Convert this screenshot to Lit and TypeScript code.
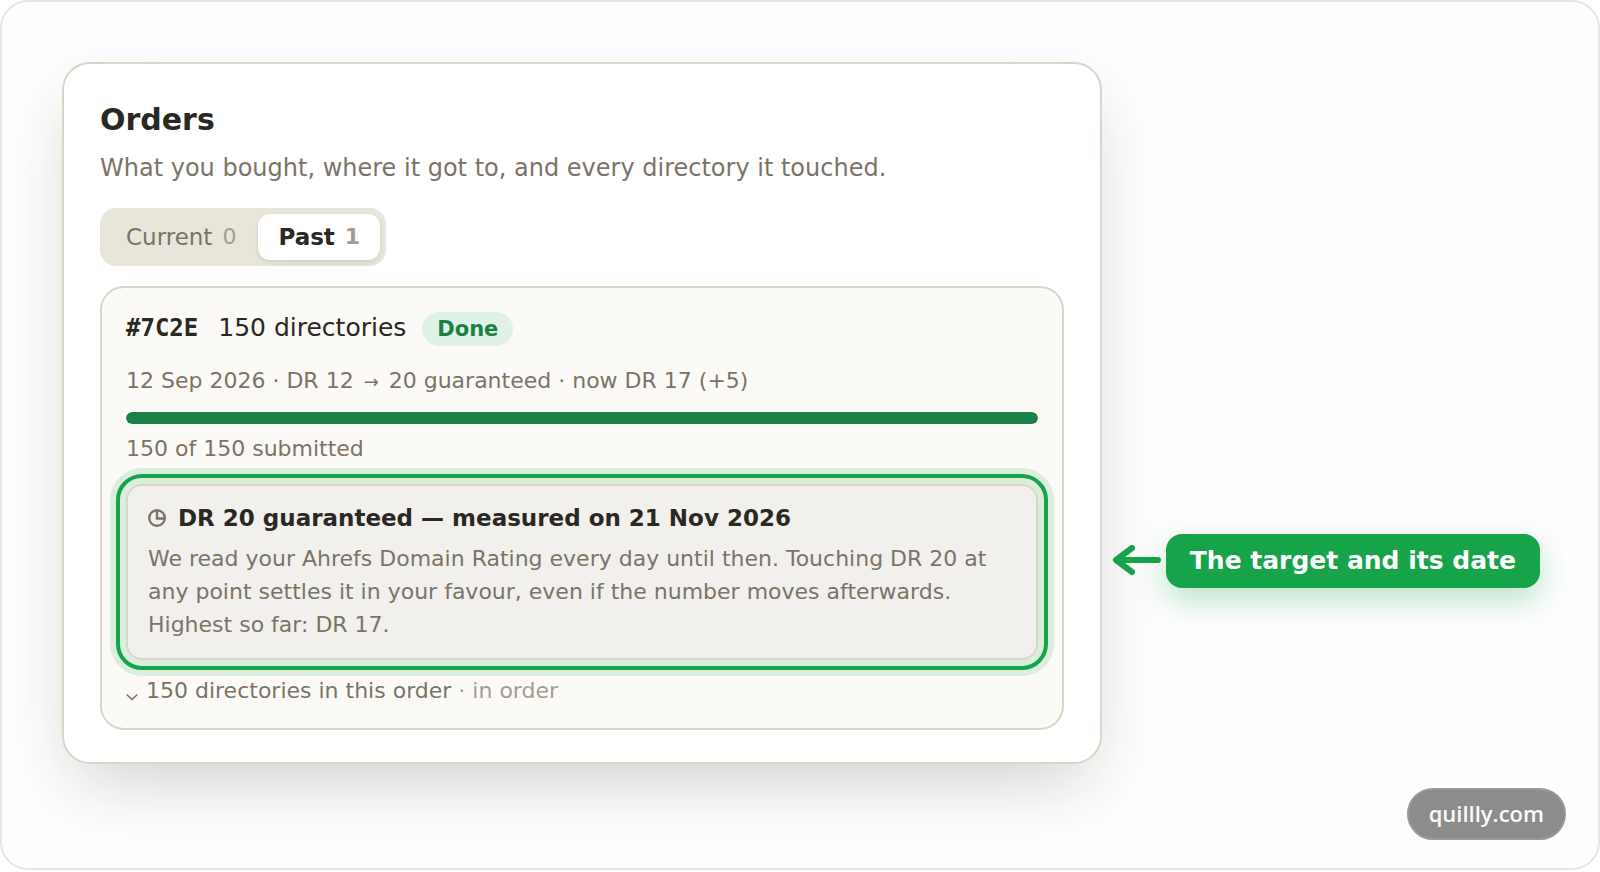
import { LitElement, html, css } from "lit";
import { customElement, state } from "lit/decorators.js";

@customElement("order-target")
class OrderTarget extends LitElement {
  static styles = css`
    :host {
      display: block;
      position: relative;
      padding: 15px 20px 17px;
      border: 2px solid #d9d6c9;
      border-radius: 16px;
      background: #f2f0ec;
    }
    :host::after {
      content: "";
      position: absolute;
      inset: -12px;
      border: 4px solid #16a34a;
      border-radius: 26px;
      box-shadow:
        0 0 0 6px rgba(22, 163, 74, 0.14),
        inset 0 0 0 6px rgba(22, 163, 74, 0.14);
      pointer-events: none;
    }
    .heading {
      display: flex;
      align-items: center;
      gap: 12px;
      margin: 0 0 7px;
      font-size: 23px;
      line-height: 34px;
      font-weight: 700;
      color: #2a2822;
    }
    .clock {
      flex: none;
      width: 18px;
      height: 18px;
      color: #7a7468;
    }
    .text {
      margin: 0;
      font-size: 22px;
      line-height: 33px;
      color: #7a7468;
    }
  `;

  render() {
    return html`
      <h3 class="heading">
        <svg class="clock" viewBox="0 0 18 18" fill="none" stroke="currentColor" stroke-width="2.4" aria-hidden="true">
          <circle cx="9" cy="9" r="7.8" />
          <path d="M9 1.5V9.5H16.5" />
        </svg>
        <span>DR 20 guaranteed — measured on 21 Nov 2026</span>
      </h3>
      <p class="text">
        We read your Ahrefs Domain Rating every day until then. Touching DR 20 at any point settles it in your favour,
        even if the number moves afterwards. Highest so far: DR 17.
      </p>
    `;
  }
}

@customElement("app-root")
class AppRoot extends LitElement {
  @state() private tab = "past";

  static styles = css`
    :host {
      display: block;
      font-family: Verdana, "DejaVu Sans", sans-serif;
      color: #2a2822;
    }
    * {
      box-sizing: border-box;
    }
    button {
      border: 0;
      background: none;
      font: inherit;
      color: inherit;
      cursor: pointer;
    }
    .frame {
      position: relative;
      display: flex;
      align-items: flex-start;
      gap: 10px;
      min-height: calc(100vh - 2px);
      padding: 60px 58px 60px 60px;
      border: 2px solid #e5e5e5;
      border-radius: 28px;
      background: #fefefe;
    }
    .card {
      flex: 1;
      min-width: 0;
      padding: 38px 36px 32px;
      border: 2px solid #d9d6c9;
      border-radius: 28px;
      background: #fff;
      box-shadow: 0 28px 70px -14px rgba(42, 36, 26, 0.22);
    }
    .title {
      margin: 0 0 12px;
      font-size: 30px;
      line-height: 36px;
      font-weight: 700;
    }
    .subtitle {
      margin: 0 0 22px;
      font-size: 24px;
      line-height: 36px;
      color: #7a7468;
    }
    .tabs {
      display: inline-flex;
      gap: 2px;
      padding: 6px;
      margin-bottom: 20px;
      border-radius: 16px;
      background: #e8e5da;
      vertical-align: top;
    }
    .tab {
      display: flex;
      gap: 10px;
      padding: 6px 20px;
      border-radius: 12px;
      font-size: 23px;
      line-height: 34px;
      color: #7a7468;
    }
    .tab.active {
      background: #fff;
      font-weight: 700;
      color: #2a2822;
      box-shadow: 0 2px 4px rgba(42, 40, 34, 0.12);
    }
    .count {
      font-size: 22px;
    }
    .faint {
      color: #a39d91;
    }
    .order {
      padding: 24px 24px 20px;
      border: 2px solid #d9d6c9;
      border-radius: 24px;
      background: #fcfaf6;
    }
    .row {
      display: flex;
      align-items: baseline;
      margin-bottom: 18px;
      font-size: 25px;
      line-height: 32px;
    }
    .code {
      margin-right: 20px;
      font-family: "DejaVu Sans Mono", monospace;
      font-size: 24px;
      font-weight: 700;
    }
    .badge {
      margin-left: 16px;
      padding: 0 15px;
      border-radius: 17px;
      background: #e0f1e6;
      color: #1b8047;
      font-size: 21px;
      line-height: 34px;
      font-weight: 700;
    }
    .meta {
      margin: 0;
      font-size: 22px;
      line-height: 34px;
      color: #7a7468;
    }
    .to {
      margin: 0 3px;
      font-size: 18px;
      line-height: 1;
    }
    .bar {
      height: 12px;
      margin: 14px 0 8px;
      border-radius: 6px;
      background: #e8e5da;
      overflow: hidden;
    }
    .fill {
      height: 100%;
      border-radius: 6px;
      background: #1b8047;
    }
    order-target {
      margin: 18px 0 14px;
    }
    .toggle {
      display: flex;
      align-items: center;
      gap: 8px;
      padding: 0;
      font-size: 22px;
      line-height: 34px;
      color: #7a7468;
    }
    .chevron {
      width: 12px;
      height: 20px;
    }
    .callout {
      display: flex;
      align-items: center;
      gap: 4px;
      margin-top: 472px;
    }
    .arrow {
      width: 50px;
      height: 32px;
    }
    .label {
      padding: 10px 24px;
      border-radius: 16px;
      background: #16a34a;
      color: #fff;
      font-size: 25px;
      line-height: 34px;
      font-weight: 700;
      white-space: nowrap;
      box-shadow: 0 12px 32px rgba(22, 163, 74, 0.3);
    }
    .site {
      position: absolute;
      right: 32px;
      bottom: 28px;
      padding: 8px 20px 10px;
      border: 2px solid #999;
      border-radius: 26px;
      background: #8c8c8c;
      color: #fafafa;
      font-family: "Open Sans", sans-serif;
      font-size: 22px;
      line-height: 30px;
      font-weight: 600;
      text-decoration: none;
    }
  `;

  private renderTab(id: string, name: string, count: number) {
    const active = this.tab === id;
    return html`
      <button
        class=${active ? "tab active" : "tab"}
        role="tab"
        aria-selected=${active ? "true" : "false"}
        @click=${() => (this.tab = id)}
      >
        <span>${name}</span><span class="faint count">${count}</span>
      </button>
    `;
  }

  render() {
    return html`
      <main class="frame">
        <section class="card">
          <h1 class="title">Orders</h1>
          <p class="subtitle">What you bought, where it got to, and every directory it touched.</p>
          <div class="tabs" role="tablist">
            ${this.renderTab("current", "Current", 0)}${this.renderTab("past", "Past", 1)}
          </div>
          <article class="order">
            <div class="row">
              <span class="code">#7C2E</span>
              <span>150 directories</span>
              <span class="badge">Done</span>
            </div>
            <p class="meta">12 Sep 2026 · DR 12 <span class="to">→</span> 20 guaranteed · now DR 17 (+5)</p>
            <div class="bar" role="progressbar" aria-valuenow="150" aria-valuemax="150" aria-label="Submitted">
              <div class="fill" style="width: ${(150 / 150) * 100}%"></div>
            </div>
            <p class="meta">150 of 150 submitted</p>
            <order-target></order-target>
            <button class="toggle">
              <svg class="chevron" viewBox="0 0 12 20" fill="none" stroke="currentColor" stroke-width="1.6" aria-hidden="true">
                <path d="M0.7 13.5L6 18.5L11.3 13.5" />
              </svg>
              <span>150 directories in this order <span class="faint">· in order</span></span>
            </button>
          </article>
        </section>
        <aside class="callout">
          <svg class="arrow" viewBox="0 0 50 32" fill="none" stroke="#16a34a" stroke-width="6" stroke-linecap="round" stroke-linejoin="round" aria-hidden="true">
            <path d="M46 15H5M20 3L4 15L20 27" />
          </svg>
          <span class="label">The target and its date</span>
        </aside>
        <a class="site" href="https://quillly.com">quillly.com</a>
      </main>
    `;
  }
}
